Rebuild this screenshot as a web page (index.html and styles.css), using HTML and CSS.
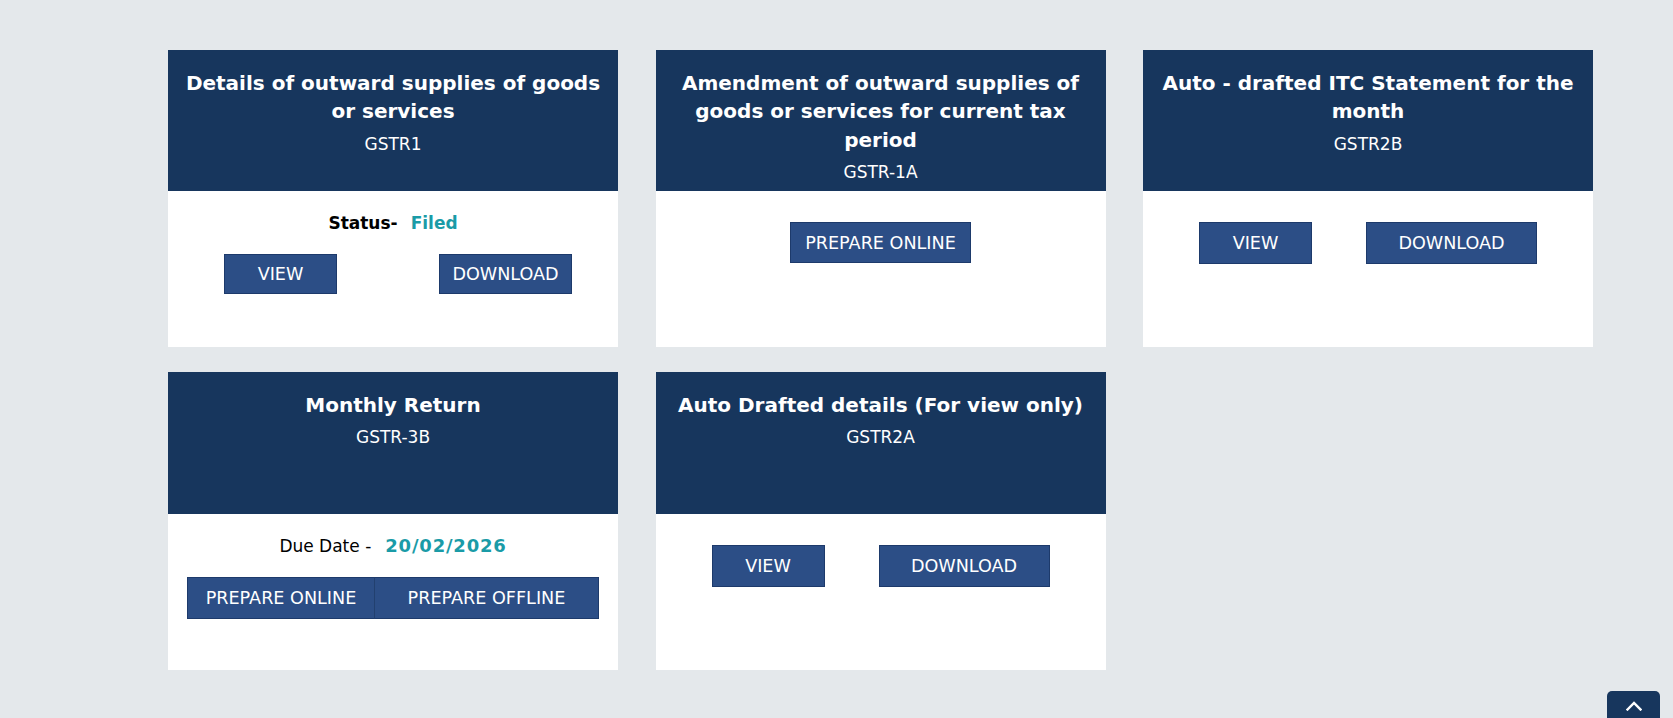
FILE: index.html
```html
<!DOCTYPE html>
<html lang="en">
<head>
<meta charset="utf-8">
<title>Returns Dashboard</title>
<link rel="stylesheet" href="styles.css">
</head>
<body>
<main class="page">
  <div class="grid">
    <section class="card">
      <header class="card-head">
        <h2 class="card-title">Details of outward supplies of goods or services</h2>
        <p class="card-code">GSTR1</p>
      </header>
      <div class="card-body">
        <p class="info"><span class="label-bold">Status-</span><span class="value">Filed</span></p>
        <div class="halves">
          <div class="half"><button class="btn btn-view">VIEW</button></div>
          <div class="half"><button class="btn btn-dl-sm">DOWNLOAD</button></div>
        </div>
      </div>
    </section>

    <section class="card">
      <header class="card-head">
        <h2 class="card-title">Amendment of outward supplies of goods or services for current tax period</h2>
        <p class="card-code">GSTR-1A</p>
      </header>
      <div class="card-body card-body--btns">
        <div class="center">
          <button class="btn btn-prep">PREPARE ONLINE</button>
        </div>
      </div>
    </section>

    <section class="card">
      <header class="card-head">
        <h2 class="card-title">Auto - drafted ITC Statement for the month</h2>
        <p class="card-code">GSTR2B</p>
      </header>
      <div class="card-body card-body--btns">
        <div class="spread">
          <button class="btn btn-view">VIEW</button>
          <button class="btn btn-dl">DOWNLOAD</button>
        </div>
      </div>
    </section>

    <section class="card card--row2">
      <header class="card-head">
        <h2 class="card-title">Monthly Return</h2>
        <p class="card-code">GSTR-3B</p>
      </header>
      <div class="card-body">
        <p class="info"><span class="label">Due Date -</span><span class="value value--date">20/02/2026</span></p>
        <div class="group">
          <button class="btn btn-group btn-online">PREPARE ONLINE</button>
          <button class="btn btn-group btn-offline">PREPARE OFFLINE</button>
        </div>
      </div>
    </section>

    <section class="card card--row2">
      <header class="card-head">
        <h2 class="card-title">Auto Drafted details (For view only)</h2>
        <p class="card-code">GSTR2A</p>
      </header>
      <div class="card-body card-body--btns">
        <div class="spread">
          <button class="btn btn-view">VIEW</button>
          <button class="btn btn-dl">DOWNLOAD</button>
        </div>
      </div>
    </section>
  </div>
</main>
<a class="to-top" href="#" aria-label="Back to top">
  <svg width="16" height="10" viewBox="0 0 16 10" aria-hidden="true"><path d="M1.5 8.5 L8 2 L14.5 8.5" fill="none" stroke="#fff" stroke-width="2.4" stroke-linecap="square"/></svg>
</a>
</body>
</html>
```

FILE: styles.css
```css
html, body {
  margin: 0;
  padding: 0;
}
body {
  background: #e4e8eb;
  font-family: "DejaVu Sans", Verdana, sans-serif;
  width: 1673px;
  height: 718px;
  overflow: hidden;
}
.page {
  padding: 50px 0 0 168px;
}
.grid {
  display: grid;
  grid-template-columns: 450px 450px 450px;
  column-gap: 37.5px;
  row-gap: 25px;
}
.card {
  background: #fff;
  display: flex;
  flex-direction: column;
  height: 297px;
}
.card--row2 {
  height: 298px;
}
.card-head {
  background: #17365d;
  color: #fff;
  height: 141px;
  box-sizing: border-box;
  padding: 19px 15px 0;
  text-align: center;
  flex: none;
}
.card--row2 .card-head {
  height: 142px;
}
.card-title {
  margin: 0;
  font-size: 20px;
  line-height: 28.3px;
  font-weight: bold;
}
.card-code {
  margin: 6px 0 0;
  font-size: 17px;
  line-height: 24px;
}
.card-body {
  padding-top: 20px;
  flex: 1;
}
.card-body--btns {
  padding-top: 31px;
}
.info {
  margin: 0 0 19px;
  text-align: center;
  font-size: 17px;
  line-height: 24px;
  color: #000;
}
.label-bold {
  font-weight: bold;
}
.value {
  font-weight: bold;
  color: #1a9ba7;
  margin-left: 13px;
}
.value--date {
  font-size: 18px;
  letter-spacing: 0.8px;
  margin-left: 14px;
}
.btn {
  font-family: "DejaVu Sans", Verdana, sans-serif;
  font-size: 17.6px;
  color: #fff;
  background: #2c4e86;
  border: 1px solid #1d3a6b;
  height: 41px;
  padding: 0;
  margin: 0;
  text-align: center;
  cursor: pointer;
}
.halves {
  display: flex;
}
.half {
  flex: 1;
  display: flex;
  justify-content: center;
}
.card-body .halves .btn {
  height: 40px;
}
.btn-view {
  width: 113px;
}
.btn-dl-sm {
  width: 133px;
}
.btn-dl {
  width: 171px;
}
.btn-prep {
  width: 181px;
}
.center {
  display: flex;
  justify-content: center;
}
.spread {
  display: flex;
  justify-content: space-between;
  padding: 0 56px;
}
.spread .btn {
  height: 42px;
}
.group {
  display: flex;
  margin: 0 19px;
}
.btn-group {
  height: 42px;
}
.btn-online {
  width: 188px;
  border-right: 1px solid #22406f;
}
.btn-offline {
  flex: 1;
  border-left: none;
}
.to-top {
  position: fixed;
  left: 1607px;
  top: 691px;
  width: 53px;
  height: 40px;
  background: #17365d;
  border-radius: 5px 5px 0 0;
  display: flex;
  justify-content: center;
  align-items: flex-start;
  padding-top: 10px;
  box-sizing: border-box;
}
```
